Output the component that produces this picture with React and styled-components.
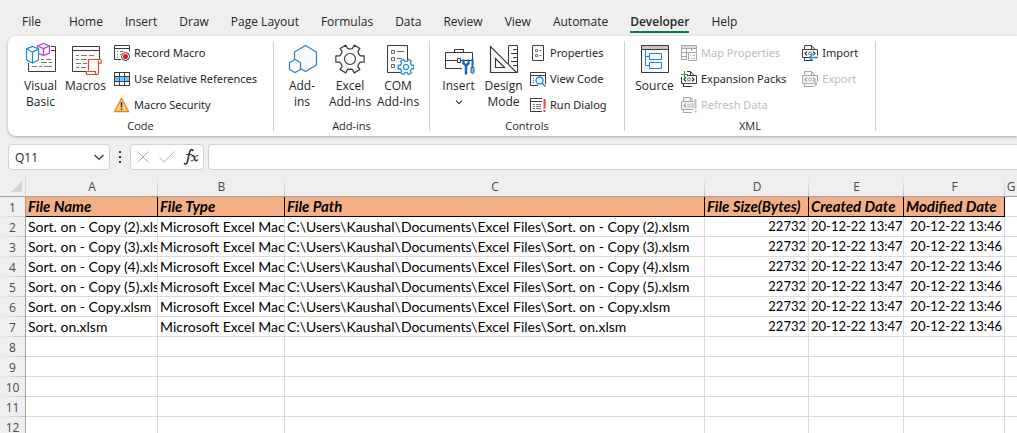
import React from "react";
import styled, { createGlobalStyle, css } from "styled-components";

const GlobalStyle = createGlobalStyle`
  *, *::before, *::after { box-sizing: border-box; }
  body {
    margin: 0;
    background: #efefef;
    color: #262626;
    font-family: "Open Sans", "Noto Sans", sans-serif;
    font-size: 12px;
  }
  button, input { font: inherit; color: inherit; }
`;

const Window = styled.div`
  display: flex;
  flex-direction: column;
  height: 100vh;
  overflow: hidden;
`;

const TabBar = styled.nav`
  display: flex;
  align-items: flex-end;
  flex: none;
  height: 36px;
  padding: 0 11px 3px;
`;

const Tab = styled.button`
  display: flex;
  flex: none;
  border: 0;
  background: none;
  padding: 0 11px;
  line-height: 18px;
  font-weight: ${(p) => (p.$active ? 600 : 400)};
  &:first-child { margin-right: 6px; }
  span {
    border-bottom: 2px solid ${(p) => (p.$active ? "#107c41" : "transparent")};
  }
`;

const Ribbon = styled.section`
  display: flex;
  flex: none;
  height: 100px;
  margin-left: 8px;
  padding: 5px 0;
  background: #fff;
  border-radius: 8px 0 0 8px;
  box-shadow: 0 1px 3px rgba(0, 0, 0, 0.3);
`;

const Group = styled.div`
  display: flex;
  flex: none;
  flex-direction: column;
  justify-content: space-between;
  width: ${(p) => p.$width}px;
  border-right: 1px solid #d0d0d0;
`;

const GroupBody = styled.div`
  display: flex;
  align-items: flex-start;
  padding-left: ${(p) => p.$inset}px;
`;

const GroupLabel = styled.div`
  text-align: center;
  font-size: 11px;
  line-height: 10px;
`;

const LargeButton = styled.button`
  display: flex;
  flex: none;
  flex-direction: column;
  align-items: center;
  width: ${(p) => (p.$wide ? 48 : 45)}px;
  padding: 2px 0 0;
  border: 0;
  background: none;
  line-height: 16px;
  white-space: nowrap;
  > svg { flex: none; margin-bottom: 3px; }
`;

const MenuMark = styled.span`
  display: flex;
  align-items: center;
  height: 16px;
`;

const SmallColumn = styled.div`
  display: flex;
  flex-direction: column;
  gap: 2px;
  margin-left: ${(p) => p.$gap}px;
`;

const SmallButton = styled.button`
  display: flex;
  align-items: center;
  gap: 4px;
  height: 24px;
  padding: 0;
  border: 0;
  background: none;
  font-family: "Noto Sans", sans-serif;
  font-size: 11px;
  line-height: 16px;
  white-space: nowrap;
  &:disabled { color: #bdbdbd; }
`;

const FormulaBar = styled.div`
  display: flex;
  flex: none;
  height: 26px;
  margin: 8px 0 7px 8px;
`;

const box = css`
  display: flex;
  align-items: center;
  background: #fff;
  border: 1px solid #d2d2d2;
  border-radius: 4px;
`;

const NameBox = styled.div`
  ${box}
  width: 102px;
  padding: 0 4px 0 6px;
  input {
    flex: 1;
    min-width: 0;
    padding: 0;
    border: 0;
    outline: 0;
    background: none;
  }
`;

const IconButton = styled.button`
  display: flex;
  padding: 0;
  border: 0;
  background: none;
`;

const Dots = styled.div`
  display: flex;
  align-items: center;
  justify-content: center;
  width: 20px;
`;

const FormulaActions = styled.div`
  ${box}
  justify-content: space-between;
  width: 74px;
  padding: 0 4px 0 5px;
`;

const FormulaInput = styled.input`
  ${box}
  flex: 1;
  min-width: 0;
  margin-left: 4px;
  padding: 0 8px;
  border-right: 0;
  border-radius: 4px 0 0 4px;
  outline: 0;
`;

const Sheet = styled.div`
  flex: 1;
  min-height: 0;
  overflow: hidden;
`;

const Grid = styled.table`
  width: 100%;
  table-layout: fixed;
  border-collapse: separate;
  border-spacing: 0;
  background: #fff;
  th, td {
    height: 20px;
    padding: 0;
    line-height: 19px;
    white-space: nowrap;
  }
  th:last-child, td:last-child { border-right: 0; }
`;

const ColumnHead = styled.th`
  background: linear-gradient(#efefef, #c4c4c4) right / 1px 100% no-repeat #efefef;
  border-bottom: 1px solid #a0a0a0;
  color: #4a4a4a;
  font-weight: 400;
  &:last-child { background: #efefef; }
`;

const Corner = styled.th`
  background: #efefef;
  border-bottom: 1px solid #a0a0a0;
  border-right: 1px solid #d8d8d8;
  svg { display: block; margin-left: 10px; }
`;

const RowHead = styled.th`
  background: linear-gradient(90deg, #efefef, #c4c4c4) bottom / 100% 1px no-repeat #efefef;
  border-right: 1px solid #a0a0a0;
  color: #4a4a4a;
  font-weight: 400;
`;

const Cell = styled.td`
  && { padding: 0 2px; }
  overflow: hidden;
  border-right: 1px solid #dadada;
  border-bottom: 1px solid #dadada;
  color: #000;
  font-family: Lato, sans-serif;
  font-size: 14px;
  ${(p) =>
    p.$number &&
    css`
      font-size: 13px;
      text-align: right;
    `}
  ${(p) =>
    p.$title &&
    css`
      background: #f4b084;
      border-color: #000;
      font-size: 15px;
      font-weight: 700;
      font-style: italic;
    `}
`;

const INK = "#3b3a39";
const BLUE = "#1e88d2";
const RED = "#e8403c";

const gear = (cx, cy, r) => {
  const pts = [];
  for (let i = 0; i < 6; i++) {
    const mid = i * 60;
    [[-30, 0.7], [-17, 0.74], [-13, 1], [13, 1], [17, 0.74]].forEach(([d, k]) => {
      const a = ((mid + d + 30) * Math.PI) / 180;
      pts.push(`${(cx + r * k * Math.sin(a)).toFixed(2)} ${(cy - r * k * Math.cos(a)).toFixed(2)}`);
    });
  }
  return `M${pts.join("L")}Z`;
};

const Large = ({ children }) => (
  <svg width="32" height="32" viewBox="0 0 32 32" fill="none" stroke={INK} aria-hidden="true">
    {children}
  </svg>
);

const Small = ({ children, stroke = INK }) => (
  <svg width="16" height="16" viewBox="0 0 16 16" fill="none" stroke={stroke} aria-hidden="true">
    {children}
  </svg>
);

const VisualBasicIcon = () => (
  <Large>
    <path d="M3.5 20V28.5H30.5V3.5H26M26 7.5H30" />
    <path d="M16 16.5h3m2 0h5M7 23.5h5m2 0h3m2 0h8M16 19.5h6m2 0h3" stroke="#777" />
    <path d="M18.5 .5L24.5 3V10L18.5 12.5L12.500 10V3ZM12.500 3L18.500 5.500L24.500 3M18.500 5.500V12.500" stroke="#b146c2" strokeWidth="1.200" fill="#faf0fb" />
    <path d="M7.500 3.500L13.500 6V17L7.500 20L1.500 17V6ZM1.500 6L7.500 9L13.500 6M7.500 9V20" stroke={BLUE} strokeWidth="1.200" fill="#fff" />
  </Large>
);

const MacrosIcon = () => (
  <Large>
    <path d="M16 28.500H2.500V3.500H29.500V16M2.500 7.500H29.500" fill="#fafafa" />
    <path d="M6 12.500h3m2 0h6m2 0h5M6 16.500h3m2 0h6M6 20.500h5m2 0h4M6 24.500h3m2 0h5" stroke="#777" />
    <path d="M18.500 27.500V16.500H30.500C31.500 16.500 31.500 20.500 30.500 20.500H28.500V30C28.500 31 28 31.500 27 31.500H17C16 31.500 16 28.500 17 28.500H25.500V30C25.500 31 26 31.500 27 31.500M28.500 20.500V17.500" stroke={RED} strokeWidth="1.200" fill="#fff" />
  </Large>
);

const AddinsIcon = () => (
  <Large>
    <path d="M19.500 2.500L30.500 9V22L19.500 28.500L8.500 22V9Z" stroke="#2b7cc4" strokeWidth="1.200" fill="#fafafa" />
    <path d="M9 16.500L14.500 19.500V26.500L9 29.500L3.500 26.500V19.500Z" stroke="#2b7cc4" strokeWidth="1.200" fill="#fff" />
  </Large>
);

const GearIcon = () => (
  <Large>
    <path d={gear(16, 16, 14.5)} strokeWidth="1.200" fill="#fafafa" strokeLinejoin="round" />
    <circle cx="16" cy="16" r="5.500" strokeWidth="1.200" fill="#fff" />
  </Large>
);

const ComIcon = () => (
  <Large>
    <path d="M5.500 2.500H25.500V29.500H5.500Z" fill="#fafafa" />
    <path d="M9.500 7.500h3v3h-3zM9.500 14.500h3v3h-3zM9.500 21.500h3v3h-3zM15 8.500h7M15 15.500h5" stroke="#666" />
    <path d={gear(24, 24, 8)} stroke={BLUE} strokeWidth="1.200" fill="#fff" />
    <circle cx="24" cy="24" r="2.500" stroke={BLUE} strokeWidth="1.200" />
  </Large>
);

const ToolboxIcon = () => (
  <Large>
    <path d="M11.500 9V6.500H20.500V9M2.500 9.500H29.500V25.500H2.500ZM2.500 17.500H14M18 17.500H29" fill="#fafafa" />
    <path d="M14.500 15.500h3v4h-3z" fill="#fff" />
    <path d="M19 18h12v14H19z" stroke="none" fill="#fff" />
    <path d="M20.500 16.500V20.500L23 22.500V31.500M25.500 16.500V20.500L23 22.500" stroke="#1468b3" strokeWidth="2.400" />
    <path d="M29.500 16V24" stroke="#1468b3" strokeWidth="2" />
    <path d="M28 24.500h3v5l-1 1h-1l-1-1z" stroke="#1468b3" fill="#83beec" />
  </Large>
);

const DesignIcon = () => (
  <Large>
    <path d="M20.500 2.500H29.500V29.500H20.500ZM25 6.500h4M23 10.500h6M25 14.500h4M23 18.500h6M25 22.500h4" />
    <path d="M2.500 3.500V29.500H28.500Z" fill="#fafafa" strokeWidth="1.200" />
    <path d="M7.500 15.500V24.500H16.500Z" fill="#fff" strokeWidth="1.200" />
  </Large>
);

const SourceIcon = () => (
  <Large>
    <path d="M2.500 2.500H29.500V29.500H2.500Z" fill="#fafafa" />
    <path d="M2.500 2.500H29.500V6.500H2.500Z" fill="#c8c6c4" />
    <path d="M6.500 7V22.500H10M6.500 13.500H10M10.500 10.500H22.500V16.500H10.500ZM10.500 19.500H22.500V25.500H10.500Z" stroke={BLUE} />
  </Large>
);

const RecordIcon = () => (
  <Small>
    <path d="M7 14.500H.5V.5H15.500V6M.5 3.500H15.500" />
    <path d="M3 6.500h1m2 0h3M3 9.500h1m2 0h1M3 12.500h1" stroke="#666" />
    <circle cx="11.500" cy="11.500" r="4" fill="#fff" />
    <circle cx="11.500" cy="11.500" r="2.500" fill="#e81123" stroke="none" />
  </Small>
);

const RelativeIcon = () => (
  <Small>
    <path d="M.5 1.500H15.500V14.500H.5Z" fill="#fff" />
    <path d="M1 5.500H15V10.500H1Z" fill="#83beec" stroke="none" />
    <path d="M.5 1.500H15.500V14.500H.5ZM5.500 1.500V14.500M10.500 1.500V14.500M1 5.500H15M1 10.500H15" />
    <path d="M5.500 5.500H10.500V10.500H5.500Z" stroke="#0f6cbd" />
  </Small>
);

const WarningIcon = () => (
  <Small>
    <path d="M7.500 1.500L14.500 14.500H.5Z" fill="#fbd27a" stroke="#e08a1e" strokeWidth="1.300" />
    <path d="M7.500 5V10.500M7.500 11.500V13" strokeWidth="1.500" />
  </Small>
);

const PropertiesIcon = () => (
  <Small>
    <path d="M2.500 .5H13.500V15.500H2.500Z" />
    <path d="M5.500 4.500h2v2h-2zM5.500 9.500h2v2h-2zM9.500 5.500h2M9.500 10.500h2" stroke="#777" />
  </Small>
);

const ViewCodeIcon = () => (
  <Small>
    <path d="M8 14.500H.5V1.500H15.500V13M.5 4.500H15.500" />
    <path d="M3 7.500h1M3 9.500h1M3 11.500h1" stroke="#666" />
    <circle cx="9.500" cy="9.500" r="3.500" stroke={BLUE} strokeWidth="1.300" fill="#eaf4fc" />
    <path d="M12 12L15.500 15.500" stroke={BLUE} strokeWidth="1.500" />
  </Small>
);

const RunDialogIcon = () => (
  <Small>
    <path d="M12 14.500H.5V1.500H12M.5 4.500H12" />
    <path d="M3 7.500h2m1 0h5M3 9.500h2m1 0h5M3 11.500h2m1 0h5" stroke="#777" />
    <path d="M14.500 2V11.500M14.500 13V15" stroke={RED} strokeWidth="2" />
  </Small>
);

const MapIcon = () => (
  <Small stroke="#a6a6a6">
    <path d="M.5 .5H15.500V3.500H.5Z" fill="#dcdcdc" />
    <path d="M6 14.500H.5V.5M5.500 3V14M10.500 3V6M1 7.500H7M1 11.500H6M15.500 3V7" />
    <path d="M7.500 7.500H15.500V15.500H7.500ZM9.500 10.500h1m1.500 0h2M9.500 13.500h1m1.500 0h2" />
  </Small>
);

const XmlPage = ({ mute }) => (
  <>
    <path d="M2.500 4V.5H9.500L12.500 4M9.500 .5V4.500M.5 4.500H15.500V12.500H.5ZM2.500 13V15M2 15.500H11" fill={mute ? "#f4f4f4" : "none"} />
    <path d="M5 6.500L3 8.500L5 10.500M11 6.500L13 8.500L11 10.500" strokeWidth="1.200" />
    <circle cx="8" cy="8.500" r="1.500" stroke={mute ? "#b0b0b0" : "#666"} />
  </>
);

const PacksIcon = () => (
  <Small>
    <XmlPage />
    <path d="M0 0h6v6H0z" stroke="none" fill="#fff" />
    <path d="M3.500 0V7M0 3.500H7" stroke="#2da44e" strokeWidth="1.200" />
  </Small>
);

const RefreshIcon = () => (
  <Small stroke="#a6a6a6">
    <XmlPage mute />
    <path d="M12.500 0h3.500v16h-3.500z" stroke="none" fill="#fff" />
    <path d="M14.500 2V12M14.500 13.500V15.500" stroke="#c0c0c0" strokeWidth="2" />
  </Small>
);

const ImportIcon = () => (
  <Small>
    <XmlPage />
    <path d="M7 10.500h9v4H7z" stroke="none" fill="#fff" />
    <path d="M16 12.500H7.500M10.500 9.500L7.500 12.500L10.500 15.500" stroke={BLUE} strokeWidth="1.300" />
  </Small>
);

const ExportIcon = () => (
  <Small stroke="#a6a6a6">
    <XmlPage mute />
    <path d="M7 10.500h9v4H7z" stroke="none" fill="#fff" />
    <path d="M6.500 12.500H15M12 9.500L15 12.500L12 15.500" stroke="#bdbdbd" strokeWidth="1.300" />
  </Small>
);

const Chevron = ({ size, weight }) => (
  <svg width={size} height={size} viewBox="0 0 12 12" fill="none" stroke="#333" strokeWidth={weight} aria-hidden="true">
    <path d="M1.500 4L6 8.500L10.500 4" />
  </svg>
);

const TABS = ["File", "Home", "Insert", "Draw", "Page Layout", "Formulas", "Data", "Review", "View", "Automate", "Developer", "Help"];

const GROUPS = [
  {
    label: "Code", width: 266, inset: 10, gap: 6,
    large: [["Visual", "Basic", VisualBasicIcon], ["Macros", "", MacrosIcon]],
    small: [[["Record Macro", RecordIcon], ["Use Relative References", RelativeIcon], ["Macro Security", WarningIcon]]],
  },
  {
    label: "Add-ins", width: 156, inset: 4, wide: true,
    large: [["Add-", "ins", AddinsIcon], ["Excel", "Add-ins", GearIcon], ["COM", "Add-ins", ComIcon]],
    small: [],
  },
  {
    label: "Controls", width: 195, inset: 6, gap: 4,
    large: [["Insert", "menu", ToolboxIcon], ["Design", "Mode", DesignIcon]],
    small: [[["Properties", PropertiesIcon], ["View Code", ViewCodeIcon], ["Run Dialog", RunDialogIcon]]],
  },
  {
    label: "XML", width: 251, inset: 7, gap: 4,
    large: [["Source", "", SourceIcon]],
    small: [
      [["Map Properties", MapIcon, true], ["Expansion Packs", PacksIcon], ["Refresh Data", RefreshIcon, true]],
      [["Import", ImportIcon], ["Export", ExportIcon, true]],
    ],
  },
];

const COLUMNS = [["A", 132], ["B", 127], ["C", 420], ["D", 104], ["E", 95], ["F", 101], ["G"]];
const TITLES = ["File Name", "File Type", "File Path", "File Size(Bytes)", "Created Date", "Modified Date"];
const FILES = ["Sort. on - Copy (2).xlsm", "Sort. on - Copy (3).xlsm", "Sort. on - Copy (4).xlsm", "Sort. on - Copy (5).xlsm", "Sort. on - Copy.xlsm", "Sort. on.xlsm"];

const ROWS = [
  TITLES,
  ...FILES.map((name) => [
    name,
    "Microsoft Excel Macro",
    `C:\\Users\\Kaushal\\Documents\\Excel Files\\${name}`,
    "22732",
    "20-12-22 13:47",
    "20-12-22 13:46",
  ]),
  [], [], [], [], [],
];

export default function App() {
  return (
    <Window>
      <GlobalStyle />
      <TabBar>
        {TABS.map((name) => (
          <Tab key={name} $active={name === "Developer"}>
            <span>{name}</span>
          </Tab>
        ))}
      </TabBar>
      <Ribbon>
        {GROUPS.map((g) => (
          <Group key={g.label} $width={g.width}>
            <GroupBody $inset={g.inset}>
              {g.large.map(([first, second, Icon]) => (
                <LargeButton key={first} $wide={g.wide}>
                  <Icon />
                  <span>{first}</span>
                  {second === "menu" ? (
                    <MenuMark><Chevron size={8} weight={1.8} /></MenuMark>
                  ) : (
                    <span>{second}</span>
                  )}
                </LargeButton>
              ))}
              {g.small.map((items, i) => (
                <SmallColumn key={i} $gap={i ? 16 : g.gap}>
                  {items.map(([name, Icon, off]) => (
                    <SmallButton key={name} disabled={off}>
                      <Icon />
                      {name}
                    </SmallButton>
                  ))}
                </SmallColumn>
              ))}
            </GroupBody>
            <GroupLabel>{g.label}</GroupLabel>
          </Group>
        ))}
      </Ribbon>
      <FormulaBar>
        <NameBox>
          <input aria-label="Name box" defaultValue="Q11" />
          <IconButton aria-label="Open name list"><Chevron size={12} weight={1.2} /></IconButton>
        </NameBox>
        <Dots>
          <svg width="4" height="12" viewBox="0 0 4 12" fill="#333" aria-hidden="true">
            <path d="M1 0h2v2H1zM1 5h2v2H1zM1 10h2v2H1z" />
          </svg>
        </Dots>
        <FormulaActions>
          <IconButton aria-label="Cancel">
            <svg width="14" height="14" viewBox="0 0 14 14" stroke="#b0b0b0"><path d="M1.500 1.500L12.500 12.500M12.500 1.500L1.500 12.500" /></svg>
          </IconButton>
          <IconButton aria-label="Enter">
            <svg width="18" height="14" viewBox="0 0 18 14" fill="none" stroke="#b0b0b0"><path d="M1.500 7.500L6 12L16.500 1.500" /></svg>
          </IconButton>
          <IconButton aria-label="Insert function">
            <svg width="16" height="18" viewBox="0 0 16 18" fill="none" stroke="#333" strokeLinecap="round">
              <path d="M10 2.500C8.500 .8 7 2 6.500 4.500L4.500 13.500C4 16 2.500 16.500 1.500 15.500" strokeWidth="1.600" />
              <path d="M3.500 6.500H8.500" />
              <path d="M9 8C10.500 6.500 11 8 11.500 10C12 12.500 12.500 13.500 14.500 12" strokeWidth="1.500" />
              <path d="M15 7.500C13 7 12 9.500 11.500 10.500C10.500 12.500 9.500 13.500 8 12.800" />
            </svg>
          </IconButton>
        </FormulaActions>
        <FormulaInput aria-label="Formula" />
      </FormulaBar>
      <Sheet>
        <Grid>
          <colgroup>
            <col width="26" />
            {COLUMNS.map(([name, width]) => <col key={name} width={width} />)}
          </colgroup>
          <thead>
            <tr>
              <Corner>
                <svg width="13" height="13" viewBox="0 0 13 13" aria-hidden="true"><path d="M12 1V12H1Z" fill="#d4d4d4" /></svg>
              </Corner>
              {COLUMNS.map(([name]) => <ColumnHead key={name} scope="col">{name}</ColumnHead>)}
            </tr>
          </thead>
          <tbody>
            {ROWS.map((row, r) => (
              <tr key={r}>
                <RowHead scope="row">{r + 1}</RowHead>
                {COLUMNS.map(([name], c) => (
                  <Cell key={name} $title={r === 0 && c < 6} $number={r > 0 && c > 2}>{row[c]}</Cell>
                ))}
              </tr>
            ))}
          </tbody>
        </Grid>
      </Sheet>
    </Window>
  );
}
